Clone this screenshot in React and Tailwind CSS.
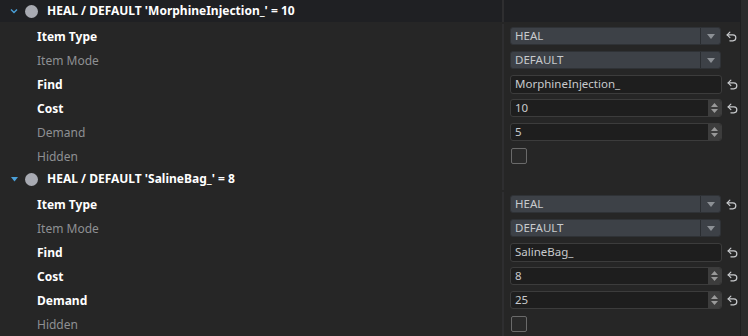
import React from 'react';

const groups = [
  {
    title: "HEAL / DEFAULT 'MorphineInjection_' = 10",
    hovered: true,
    rows: [
      { label: 'Item Type', kind: 'select', value: 'HEAL', changed: true },
      { label: 'Item Mode', kind: 'select', value: 'DEFAULT', changed: false },
      { label: 'Find', kind: 'text', value: 'MorphineInjection_', changed: true },
      { label: 'Cost', kind: 'number', value: '10', changed: true },
      { label: 'Demand', kind: 'number', value: '5', changed: false },
      { label: 'Hidden', kind: 'check', changed: false },
    ],
  },
  {
    title: "HEAL / DEFAULT 'SalineBag_' = 8",
    hovered: false,
    rows: [
      { label: 'Item Type', kind: 'select', value: 'HEAL', changed: true },
      { label: 'Item Mode', kind: 'select', value: 'DEFAULT', changed: false },
      { label: 'Find', kind: 'text', value: 'SalineBag_', changed: true },
      { label: 'Cost', kind: 'number', value: '8', changed: true },
      { label: 'Demand', kind: 'number', value: '25', changed: true },
      { label: 'Hidden', kind: 'check', changed: false },
    ],
  },
];

const RevertIcon = () => (
  <svg width="13" height="13" viewBox="0 0 24 24" fill="none" stroke="#c9cbce" strokeWidth="2.2" strokeLinecap="round" strokeLinejoin="round">
    <path d="M9 14 4 9l5-5" />
    <path d="M4 9h10.5a5.5 5.5 0 0 1 0 11H9" />
  </svg>
);

const Control = ({ row }) => {
  if (row.kind === 'select') {
    return (
      <div className="flex h-[18px] w-[211px] items-stretch rounded-[3px] border border-[#2f3236] bg-[#3d4147]">
        <div className="flex flex-1 items-center pl-[4px] text-[11.5px] text-[#c8cacd]">{row.value}</div>
        <div className="flex w-[20px] items-center justify-center border-l border-[#2a2d31]">
          <svg width="8" height="5" viewBox="0 0 8 5">
            <path d="M0 0h8L4 5z" fill="#8c9095" />
          </svg>
        </div>
      </div>
    );
  }
  if (row.kind === 'text') {
    return (
      <div className="flex h-[19px] w-[212px] items-center rounded-[3px] border border-[#3c3c3c] bg-[#1e1e1e] pl-[4px] text-[11.5px] text-[#c8cacd]">
        {row.value}
      </div>
    );
  }
  if (row.kind === 'number') {
    return (
      <div className="flex h-[18px] w-[212px] items-stretch rounded-[3px] border border-[#3c3c3c] bg-[#1e1e1e]">
        <div className="flex flex-1 items-center pl-[4px] text-[11.5px] text-[#c8cacd]">{row.value}</div>
        <div className="flex w-[13px] flex-col items-center justify-center gap-[2px] rounded-r-[2px] bg-[#3d3d3d]">
          <svg width="7" height="4" viewBox="0 0 7 4">
            <path d="M0 4h7L3.5 0z" fill="#9a9a9a" />
          </svg>
          <svg width="7" height="4" viewBox="0 0 7 4">
            <path d="M0 0h7L3.5 4z" fill="#9a9a9a" />
          </svg>
        </div>
      </div>
    );
  }
  return <div className="ml-[1px] h-[16px] w-[16px] rounded-[2px] border border-[#6a6a6a] bg-[#2a2a2a]" />;
};

const Group = ({ group }) => (
  <div>
    <div className={`flex h-6 ${group.hovered ? '' : ''}`}>
      <div className={`flex h-[22px] w-[502px] items-center ${group.hovered ? 'bg-[#1f2023]' : ''}`}>
        <div className="flex w-[25px] justify-center pl-[3px]">
          {group.hovered ? (
            <svg width="8" height="6" viewBox="0 0 8 6">
              <path d="M1 1.5 4 4.5 7 1.5" fill="none" stroke="#4a9fd8" strokeWidth="1.4" />
            </svg>
          ) : (
            <svg width="7" height="5" viewBox="0 0 7 5">
              <path d="M0 0h7L3.5 4.5z" fill="#4a9fd8" />
            </svg>
          )}
        </div>
        <div className="h-[13px] w-[13px] rounded-full bg-[#a8aab2]" />
        <div className="ml-[9px] text-[12px] font-bold text-white">{group.title}</div>
      </div>
      <div className={`h-[22px] flex-1 border-l-2 border-[#2e2e30] ${group.hovered ? 'bg-[#1f2023]' : ''}`} />
    </div>
    {group.rows.map((row) => (
      <div key={row.label} className="flex h-6">
        <div
          className={`flex w-[502px] items-center pl-[37px] pt-[1px] text-[12px] ${
            row.changed ? 'font-bold text-white' : 'text-[#8e9093]'
          }`}
        >
          {row.label}
        </div>
        <div className="flex flex-1 items-center gap-[4px] border-l-2 border-[#2e2e30] pl-[6px]">
          <Control row={row} />
          {row.changed ? <RevertIcon /> : null}
        </div>
      </div>
    ))}
  </div>
);

export default function App() {
  return (
    <div
      className="flex h-[336px] w-[748px] overflow-hidden bg-[#262626]"
      style={{ fontFamily: '"Noto Sans", "Open Sans", sans-serif' }}
    >
      <div className="flex-1">
        {groups.map((g) => (
          <Group key={g.title} group={g} />
        ))}
      </div>
      <div className="w-[8px] border-l border-[#1f1f1f] bg-[#2b2b2b]" />
    </div>
  );
}
